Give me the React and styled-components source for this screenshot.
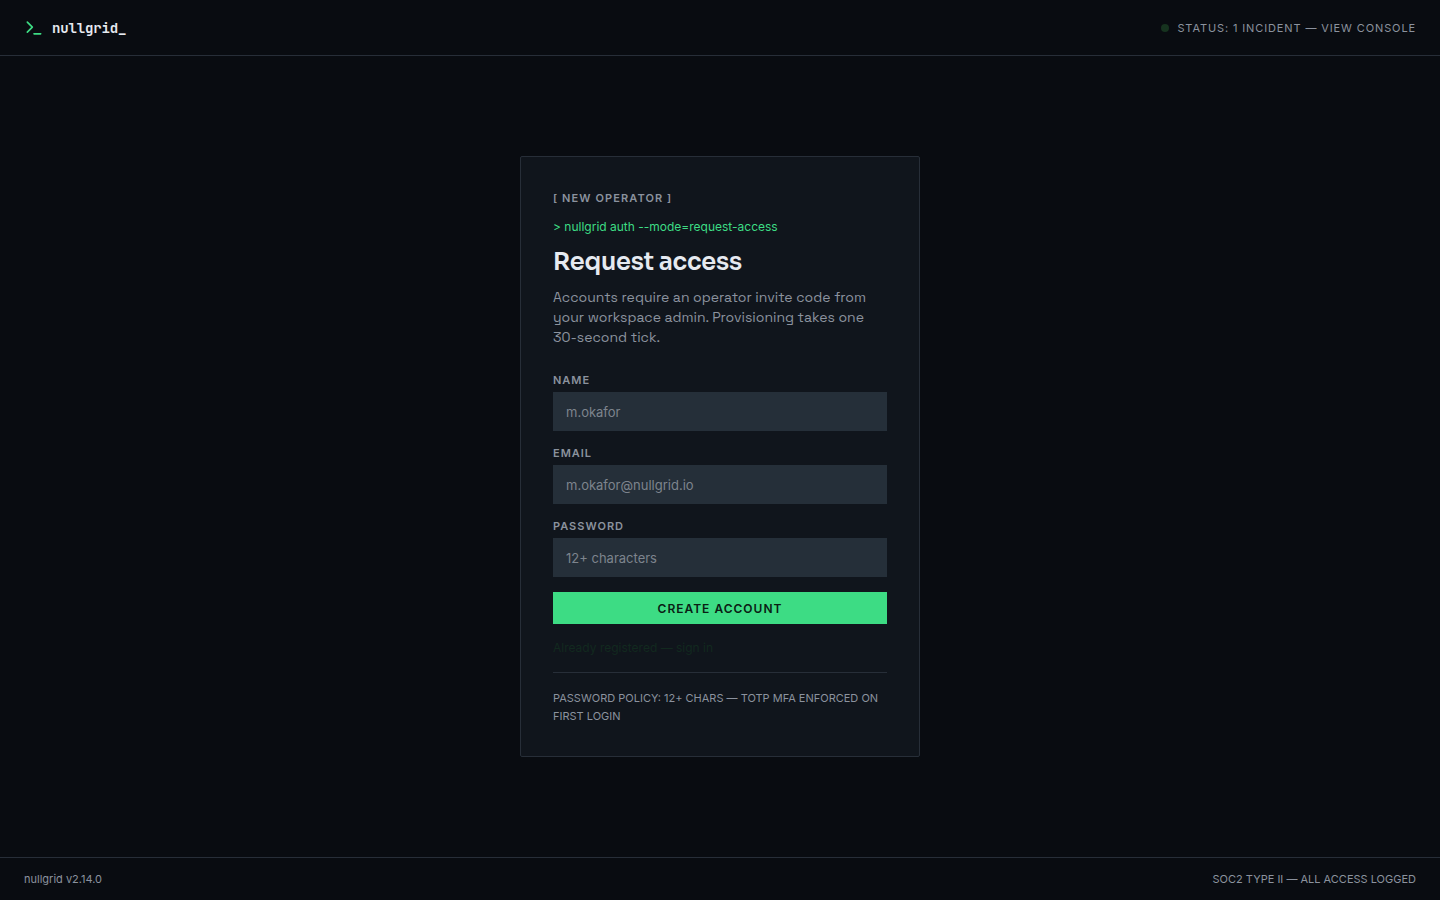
import React, { useState } from 'react'
import styled, { createGlobalStyle } from 'styled-components'
import { Terminal } from 'lucide-react'

const GlobalStyle = createGlobalStyle`
  *, *::before, *::after {
    box-sizing: border-box;
  }

  body {
    margin: 0;
    background: #090c11;
    color: #8b929e;
    font-family: Inter, 'Liberation Sans', sans-serif;
    font-size: 11px;
    line-height: 18px;
  }
`

const Page = styled.div`
  display: flex;
  flex-direction: column;
  min-height: 100vh;
`

const Header = styled.header`
  display: flex;
  align-items: center;
  justify-content: space-between;
  height: 56px;
  padding: 0 24px;
  border-bottom: 1px solid #272e38;
`

const Brand = styled.a`
  display: flex;
  align-items: center;
  gap: 8px;
  color: #e6eaf0;
  font-family: 'JetBrains Mono', 'Liberation Mono', monospace;
  font-size: 14px;
  font-weight: 700;
  letter-spacing: -0.01em;
  text-decoration: none;
`

const StatusLink = styled.a`
  display: flex;
  align-items: center;
  gap: 8px;
  color: #8b929e;
  letter-spacing: 0.08em;
  text-decoration: none;
  text-transform: uppercase;
`

const StatusDot = styled.span`
  width: 8px;
  height: 8px;
  border-radius: 50%;
  background: #16331f;
`

const Main = styled.main`
  display: flex;
  flex: 1;
  align-items: center;
  justify-content: center;
  padding: 24px;
`

const Card = styled.section`
  width: 100%;
  max-width: 400px;
  padding: 32px 32px 31px;
  border: 1px solid #272e38;
  border-radius: 2px;
  background: #10151c;
`

const Eyebrow = styled.p`
  margin: 0 0 10px;
  font-weight: 600;
  letter-spacing: 0.1em;
  text-transform: uppercase;
`

const Command = styled.p`
  margin: 0 0 8px;
  color: #3ddc84;
  font-size: 12px;
  line-height: 20px;
`

const Title = styled.h1`
  margin: 0 0 8px;
  color: #e6eaf0;
  font-family: Sora, Inter, sans-serif;
  font-size: 24px;
  font-weight: 600;
  letter-spacing: -0.01em;
  line-height: 34px;
`

const Intro = styled.p`
  margin: 0 0 24px;
  font-family: 'Space Grotesk', Inter, sans-serif;
  font-size: 14px;
  line-height: 20px;
`

const Form = styled.form`
  display: flex;
  flex-direction: column;
  gap: 13px;
`

const Field = styled.div`
  display: flex;
  flex-direction: column;
  gap: 3px;
`

const Label = styled.label`
  font-weight: 600;
  letter-spacing: 1px;
  text-transform: uppercase;
`

const Input = styled.input`
  width: 100%;
  height: 39px;
  padding: 0 13px;
  border: 0;
  border-radius: 0;
  background: #252f39;
  color: #e6eaf0;
  font-family: inherit;
  font-size: 13px;

  &::placeholder {
    color: #7d848d;
    opacity: 1;
  }

  &:focus {
    outline: 1px solid #3ddc84;
  }
`

const Button = styled.button`
  height: 32px;
  margin-top: 2px;
  border: 0;
  background: #3ddc84;
  color: #0a2014;
  font-family: inherit;
  font-size: 12px;
  font-weight: 600;
  letter-spacing: 1px;
  text-transform: uppercase;
  cursor: pointer;
`

const SignIn = styled.a`
  display: block;
  margin: 14px 0;
  color: #12291f;
  font-size: 12px;
  line-height: 20px;
  text-decoration: none;
`

const Policy = styled.p`
  margin: 0;
  padding-top: 16px;
  border-top: 1px solid #272e38;
  text-transform: uppercase;
`

const Footer = styled.footer`
  display: flex;
  justify-content: space-between;
  padding: 12px 24px;
  border-top: 1px solid #272e38;
`

const fields = [
  { name: 'name', label: 'Name', type: 'text', placeholder: 'm.okafor' },
  { name: 'email', label: 'Email', type: 'email', placeholder: 'm.okafor@nullgrid.io' },
  { name: 'password', label: 'Password', type: 'password', placeholder: '12+ characters' },
]

function App() {
  const [values, setValues] = useState({ name: '', email: '', password: '' })

  const handleChange = event => {
    const { name, value } = event.target
    setValues(prev => ({ ...prev, [name]: value }))
  }

  const handleSubmit = event => {
    event.preventDefault()
  }

  return (
    <Page>
      <GlobalStyle />
      <Header>
        <Brand href="#">
          <Terminal size={20} color="#3ddc84" aria-hidden="true" />
          nullgrid_
        </Brand>
        <StatusLink href="#console">
          <StatusDot />
          Status: 1 incident — view console
        </StatusLink>
      </Header>
      <Main>
        <Card>
          <Eyebrow>[ New operator ]</Eyebrow>
          <Command>&gt; nullgrid auth --mode=request-access</Command>
          <Title>Request access</Title>
          <Intro>
            Accounts require an operator invite code from your workspace admin. Provisioning takes one 30-second tick.
          </Intro>
          <Form onSubmit={handleSubmit}>
            {fields.map(field => (
              <Field key={field.name}>
                <Label htmlFor={field.name}>{field.label}</Label>
                <Input
                  id={field.name}
                  name={field.name}
                  type={field.type}
                  placeholder={field.placeholder}
                  value={values[field.name]}
                  onChange={handleChange}
                />
              </Field>
            ))}
            <Button type="submit">Create account</Button>
          </Form>
          <SignIn href="#sign-in">Already registered — sign in</SignIn>
          <Policy>Password policy: 12+ chars — TOTP MFA enforced on first login</Policy>
        </Card>
      </Main>
      <Footer>
        <span>nullgrid v2.14.0</span>
        <span>SOC2 TYPE II — ALL ACCESS LOGGED</span>
      </Footer>
    </Page>
  )
}

export default App
